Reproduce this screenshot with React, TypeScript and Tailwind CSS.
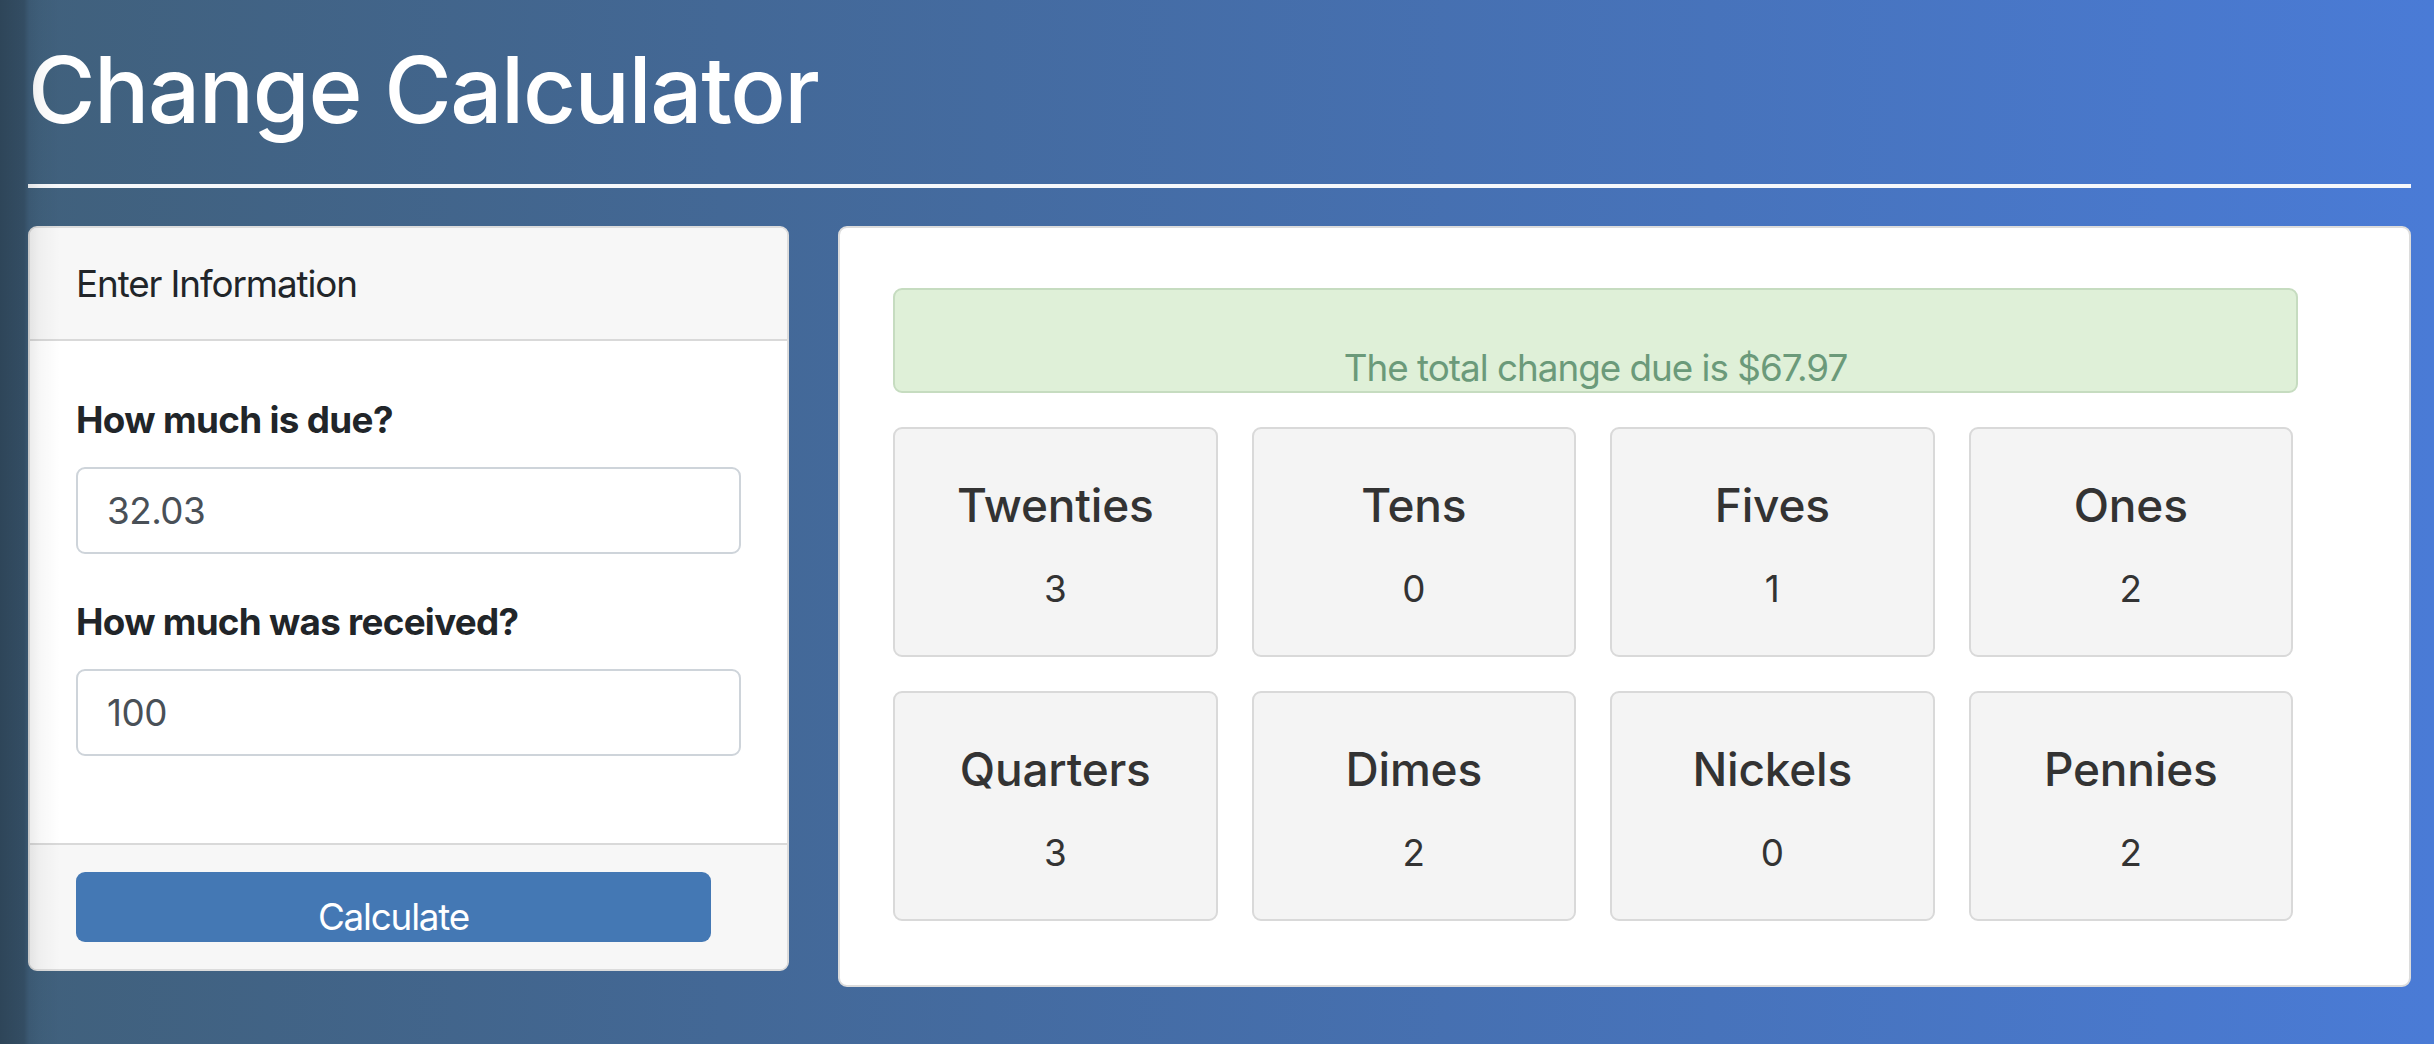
import React from 'react';

const bills = [
  { name: 'Twenties', count: 3 },
  { name: 'Tens', count: 0 },
  { name: 'Fives', count: 1 },
  { name: 'Ones', count: 2 },
  { name: 'Quarters', count: 3 },
  { name: 'Dimes', count: 2 },
  { name: 'Nickels', count: 0 },
  { name: 'Pennies', count: 2 },
];

function Tile({ name, count }: { name: string; count: number }) {
  return (
    <div className="h-[230px] border-2 border-[#d9d9d9] bg-[#f4f4f4] rounded-[9px] flex flex-col items-center pt-[49px] text-[#333333]">
      <h5 className="text-[46px] leading-[55px] font-medium tracking-[-0.2px]">{name}</h5>
      <p className="mt-[28px] text-[36.8px] leading-[55px]">{count}</p>
    </div>
  );
}

export default function App() {
  return (
    <div className="relative min-h-screen w-full bg-[linear-gradient(to_right,#40607b,#4a7bd6)] font-['Inter','Liberation_Sans',sans-serif] pl-[28px] pr-[23px] pt-[35px] pb-[57px]">
      {/* left edge window shadow */}
      <div className="absolute inset-y-0 left-0 w-[60px] pointer-events-none z-10 bg-[linear-gradient(to_right,rgba(0,0,0,0.28),rgba(0,0,0,0.2)_24px,rgba(0,0,0,0.08)_29px,rgba(0,0,0,0.03)_40px,rgba(0,0,0,0)_60px)]"></div>

      <h1 className="text-[92px] leading-[110px] font-medium tracking-[-1.4px] text-white">Change Calculator</h1>
      <div className="mt-[39px] h-[4px] bg-[#f6f8fb]"></div>

      <div className="mt-[38px] flex items-start gap-[49px]">
        {/* Input card */}
        <div className="w-[761px] rounded-[9px] border-2 border-[#dcdcdc] bg-white overflow-hidden">
          <div className="bg-[#f7f7f7] border-b-2 border-[#d9d9d9] px-[46px] py-[28px] text-[36.8px] leading-[55px] tracking-[-1.1px] text-[#212529]">
            Enter Information
          </div>
          <div className="px-[46px] pt-[51px] pb-[87px] text-[#212529]">
            <label className="block text-[36.8px] leading-[55px] font-bold tracking-[-0.65px]">How much is due?</label>
            <input
              defaultValue="32.03"
              className="mt-[20px] block w-full h-[87px] border-2 border-[#ced4da] rounded-[9px] px-[29px] text-[36.8px] tracking-[-0.5px] text-[#495057] outline-none"
            />
            <label className="mt-[40px] block text-[36.8px] leading-[55px] font-bold tracking-[-0.7px]">How much was received?</label>
            <input
              defaultValue="100"
              className="mt-[20px] block w-full h-[87px] border-2 border-[#ced4da] rounded-[9px] px-[29px] text-[36.8px] tracking-[-0.5px] text-[#495057] outline-none"
            />
          </div>
          <div className="bg-[#f7f7f7] border-t-2 border-[#d9d9d9] px-[46px] py-[27px]">
            <button className="block w-[635px] h-[70px] pt-[17px] rounded-[9px] bg-[#4478b4] text-white text-[36.8px] leading-[55px] tracking-[-1.2px] text-center">
              Calculate
            </button>
          </div>
        </div>

        {/* Results card */}
        <div className="flex-1 rounded-[9px] border-2 border-[#dcdcdc] bg-white pl-[53px] pt-[60px] pb-[64px]">
          <div className="w-[1405px] h-[105px] border-2 border-[#c6dcc0] bg-[#dff0d8] rounded-[9px] pt-[50px] text-center text-[36.8px] leading-[55px] tracking-[-1px] text-[#6b9a7a]">
            The total change due is $67.97
          </div>
          <div className="mt-[34px] w-[1400px] grid grid-cols-4 gap-[34px]">
            {bills.map((b) => (
              <Tile key={b.name} name={b.name} count={b.count} />
            ))}
          </div>
        </div>
      </div>
    </div>
  );
}
